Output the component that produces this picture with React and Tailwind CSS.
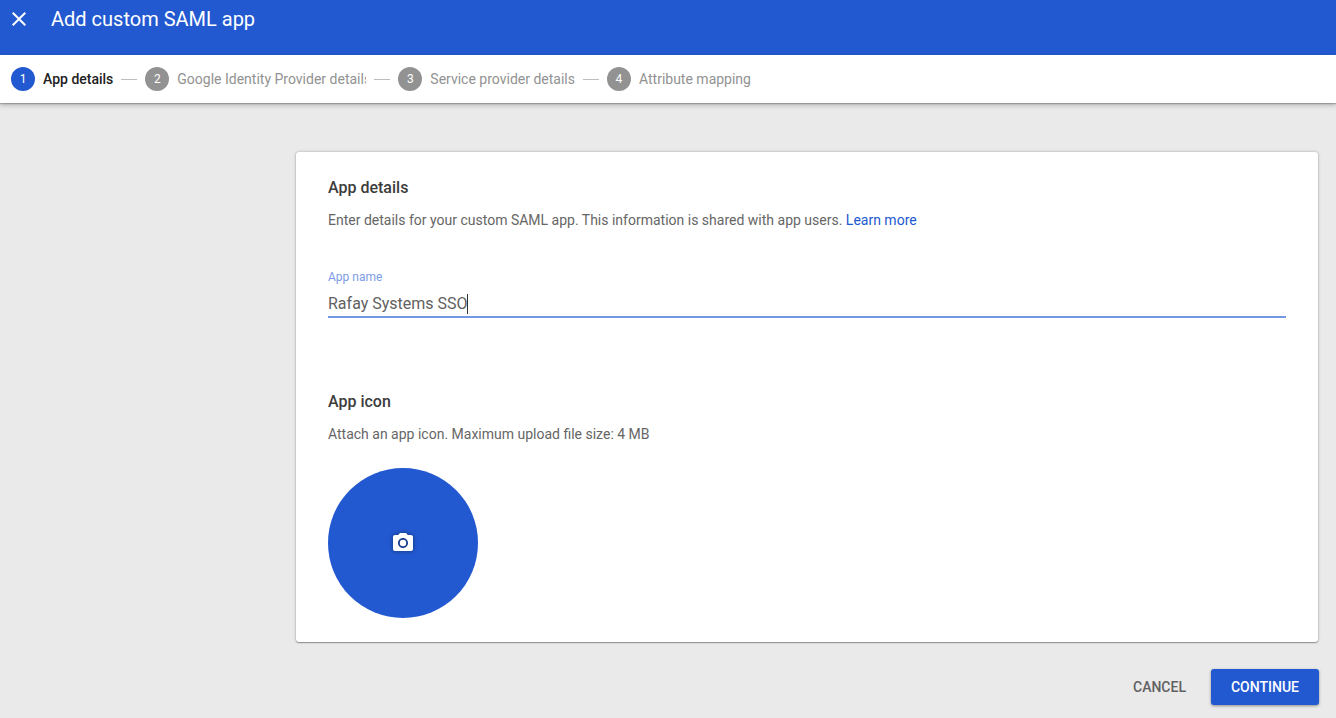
import React, { useState } from 'react';
import { MdClose, MdPhotoCamera } from 'react-icons/md';

const steps = ['App details', 'Google Identity Provider details', 'Service provider details', 'Attribute mapping'];

const Stepper = ({ current }) => (
  <ol className="relative z-10 flex h-12 items-center bg-white px-[11px] text-sm shadow-[0_1px_1px_rgba(0,0,0,0.2),0_2px_5px_rgba(0,0,0,0.25)]">
    {steps.map((step, index) => (
      <li key={step} className="flex items-center">
        {index > 0 && <span className="mx-2 h-px w-4 bg-[#bdbdbd]" />}
        <span
          className={`flex size-6 shrink-0 items-center justify-center rounded-full text-xs text-white ${
            index === current ? 'bg-[#2259d0]' : 'bg-[#929292]'
          }`}
        >
          {index + 1}
        </span>
        <span
          className={`ml-2 max-w-[189px] overflow-hidden whitespace-nowrap ${
            index === current ? 'font-medium text-[#212121]' : 'text-[#929292]'
          }`}
        >
          {step}
        </span>
      </li>
    ))}
  </ol>
);

const App = () => {
  const [appName, setAppName] = useState('Rafay Systems SSO');

  return (
    <div className="flex min-h-screen flex-col bg-[#eaeaea] font-['Roboto',sans-serif]">
      <header className="flex h-[55px] items-start bg-[#2259d0] px-[7px] text-white">
        <button type="button" aria-label="Close" className="mt-[7px]">
          <MdClose className="size-6" />
        </button>
        <h1 className="ml-5 mt-[5px] text-xl leading-7">Add custom SAML app</h1>
      </header>

      <Stepper current={0} />

      <main className="flex flex-col items-end pl-4 pr-[17px] pt-[49px]">
        <form className="w-full max-w-[1024px]" onSubmit={(e) => e.preventDefault()}>
          <div className="mx-px rounded-[3px] bg-white px-8 pb-6 pt-6 shadow-[0_1px_1px_rgba(0,0,0,0.3),0_0_3px_rgba(0,0,0,0.3)]">
            <h2 className="text-base font-medium leading-6 text-[#3c3c3c]">App details</h2>
            <p className="mt-[10px] text-sm leading-5 text-[#666666]">
              Enter details for your custom SAML app. This information is shared with app users.{' '}
              <a href="#learn-more" className="text-[#2259d0]">Learn more</a>
            </p>

            {/* App name field */}
            <div className="relative mt-[39px]">
              <label htmlFor="appName" className="block text-xs leading-4 text-[#7b9be6]">App name</label>
              <input
                id="appName"
                name="appName"
                type="text"
                value={appName}
                onChange={(e) => setAppName(e.target.value)}
                className="mt-1 block h-[29px] w-full border-b-2 border-[#7298e3] pt-0.5 text-base text-[#616161] outline-none"
              />
              <span className="absolute bottom-1 left-[139px] h-5 w-px bg-[#333333]" />
            </div>

            {/* App icon upload */}
            <h2 className="mt-[72px] text-base font-medium leading-6 text-[#3c3c3c]">App icon</h2>
            <p className="mt-[10px] text-sm leading-5 text-[#666666]">
              Attach an app icon. Maximum upload file size: 4 MB
            </p>
            <button
              type="button"
              aria-label="Upload app icon"
              className="mt-6 flex size-[150px] items-center justify-center rounded-full bg-[#2259d0] text-white"
            >
              <MdPhotoCamera className="size-6 drop-shadow-[0_0_2px_rgba(0,0,0,0.45)]" />
            </button>
          </div>

          <div className="mt-[27px] flex justify-end gap-[5px] text-sm font-medium">
            <button type="button" className="h-9 px-5 text-[#616161]">CANCEL</button>
            <button
              type="submit"
              className="h-9 rounded-[3px] bg-[#2259d0] px-5 text-white shadow-[0_1px_3px_rgba(0,0,0,0.4)]"
            >
              CONTINUE
            </button>
          </div>
        </form>
      </main>
    </div>
  );
};

export default App;
